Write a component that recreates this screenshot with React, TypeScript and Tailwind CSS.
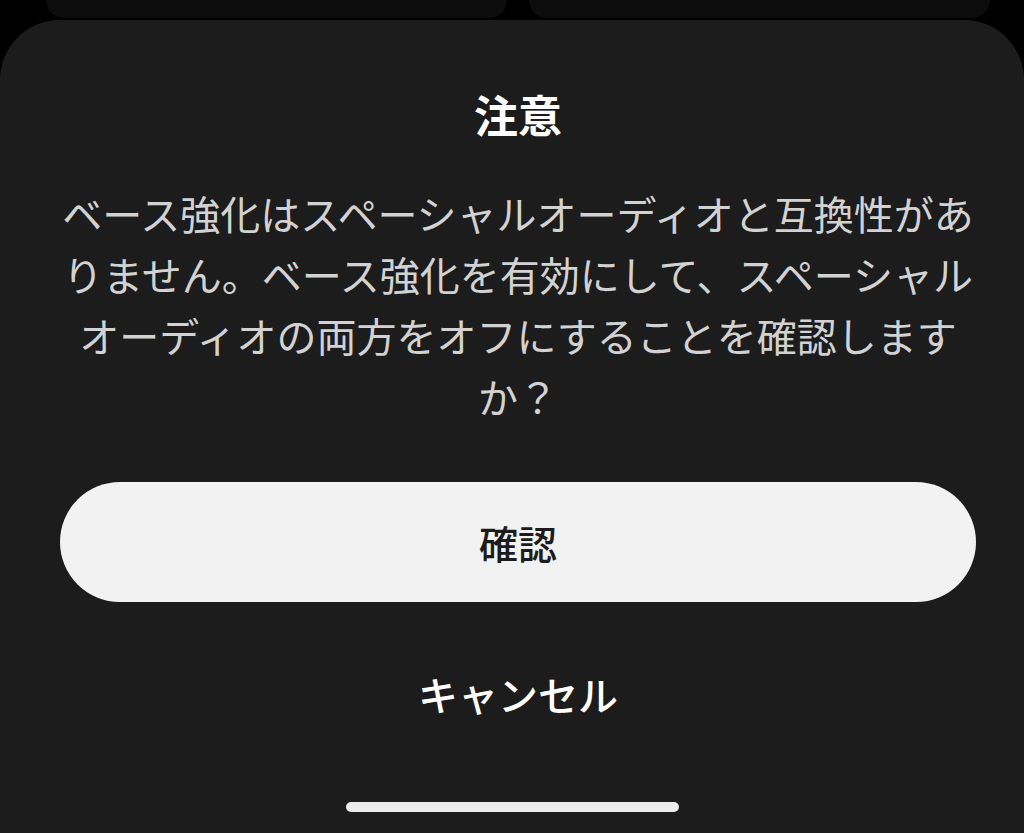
export default function App() {
  return (
    <div
      className="relative w-[1024px] h-[833px] overflow-hidden bg-black"
      style={{ fontFamily: '"Noto Sans CJK JP", "Noto Sans", sans-serif' }}
    >
      {/* cards of the screen behind the sheet */}
      <div className="flex h-[18px] pl-[46px] pr-[34px] gap-[22px]">
        <div className="flex-1 rounded-b-[36px] bg-[#0c0c0c]" />
        <div className="flex-1 rounded-b-[36px] bg-[#0c0c0c]" />
      </div>

      <div className="mt-[2px] h-[813px] rounded-t-[60px] bg-[#1c1c1c] flex flex-col items-center pt-[66px]">
        <div className="flex flex-col items-center pl-[12px]">
          <h1 className="text-[44px] leading-[56px] font-bold text-white">注意</h1>

          <p className="mt-[41px] text-center text-[40px] leading-[61px] text-[#d2d2d2]">
            ベース強化はスペーシャルオーディオと互換性があ
            <br />
            りません。ベース強化を有効にして、スペーシャル
            <br />
            オーディオの両方をオフにすることを確認します
            <br />
            か？
          </p>

          <button className="mt-[55px] w-[916px] h-[120px] rounded-full bg-[#f2f2f2] text-[39px] font-medium text-[#1c1c1c]">
            確認
          </button>

          <button className="mt-[62px] h-[60px] text-[40px] leading-[60px] font-medium text-white">
            キャンセル
          </button>
        </div>

        <div className="mt-[78px] w-[333px] h-[10px] rounded-full bg-[#ececec]" />
      </div>
    </div>
  );
}
